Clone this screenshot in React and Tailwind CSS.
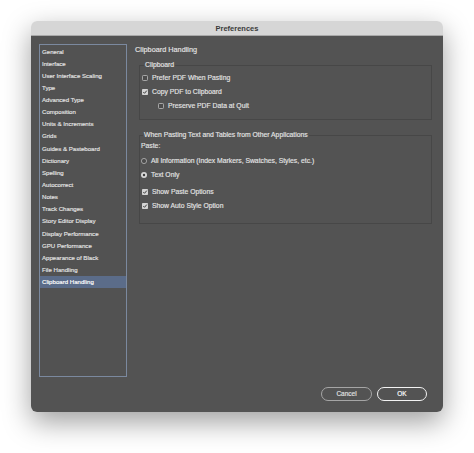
import React from 'react';

const sections = [
  'General',
  'Interface',
  'User Interface Scaling',
  'Type',
  'Advanced Type',
  'Composition',
  'Units & Increments',
  'Grids',
  'Guides & Pasteboard',
  'Dictionary',
  'Spelling',
  'Autocorrect',
  'Notes',
  'Track Changes',
  'Story Editor Display',
  'Display Performance',
  'GPU Performance',
  'Appearance of Black',
  'File Handling',
  'Clipboard Handling',
];

const Checkbox = ({ checked }) => (
  <svg width="6" height="6" viewBox="0 0 6 6" className="shrink-0">
    {checked ? (
      <>
        <rect x="0" y="0" width="6" height="6" rx="0.8" fill="#d4d4d4" />
        <path d="M1.3 3.1 L2.5 4.3 L4.8 1.6" stroke="#3c3c3c" strokeWidth="1" fill="none" />
      </>
    ) : (
      <rect x="0.5" y="0.5" width="5" height="5" rx="0.8" fill="#4c4c4c" stroke="#bdbdbd" strokeWidth="0.8" />
    )}
  </svg>
);

const Radio = ({ checked }) => (
  <svg width="6" height="6" viewBox="0 0 6 6" className="shrink-0">
    {checked ? (
      <>
        <circle cx="3" cy="3" r="3" fill="#d8d8d8" />
        <circle cx="3" cy="3" r="1.2" fill="#3c3c3c" />
      </>
    ) : (
      <circle cx="3" cy="3" r="2.6" fill="#4c4c4c" stroke="#b5b5b5" strokeWidth="0.8" />
    )}
  </svg>
);

const Option = ({ children, control, className = '' }) => (
  <div className={`flex h-[14px] items-center gap-[4px] ${className}`}>
    {control}
    <span>{children}</span>
  </div>
);

export default function App() {
  return (
    <div
      className="h-[453px] w-[474px] bg-white pl-[31px] pt-[21px]"
      style={{ fontFamily: '"Liberation Sans", Arial, sans-serif' }}
    >
      <div className="flex h-[391px] w-[412px] flex-col overflow-hidden rounded-[6px] shadow-[0_10px_28px_rgba(0,0,0,0.38)]">
        <div className="flex h-[15px] shrink-0 items-center justify-center border-b border-[#a9a9a9] bg-[#d6d6d6] pt-[1px] text-[7.5px] font-bold text-[#3a3a3a]">
          Preferences
        </div>

        <div className="flex flex-1 flex-col bg-[#535353] px-[8px] pt-[8px] text-[#e4e4e4] [-webkit-text-stroke:0.15px]">
          <div className="flex">
            <ul className="h-[333px] w-[88px] shrink-0 border border-[#7b899f] bg-[#525252] text-[6.1px]">
              {sections.map((name) => (
                <li
                  key={name}
                  className={`flex h-[12.15px] items-center pl-[2px] ${
                    name === 'Clipboard Handling' ? 'bg-[#5b6c89] text-white' : ''
                  }`}
                >
                  {name}
                </li>
              ))}
            </ul>

            <div className="ml-[8px] flex-1 pr-[3px] text-[6.8px]">
              <div className="h-[12px] text-[7.3px] leading-[12px]">Clipboard Handling</div>

              <fieldset className="ml-[4px] mt-[4px] border border-[#474747] pb-[6px] pl-[2px] pt-[1px]">
                <legend className="ml-[2px] h-[10px] px-[1px] leading-[10px]">Clipboard</legend>
                <Option control={<Checkbox />}>Prefer PDF When Pasting</Option>
                <Option control={<Checkbox checked />}>Copy PDF to Clipboard</Option>
                <Option control={<Checkbox />} className="pl-[16px]">
                  Preserve PDF Data at Quit
                </Option>
              </fieldset>

              <fieldset className="ml-[4px] mt-[10px] border border-[#474747] pb-[10px] pl-[2px] pt-[1px]">
                <legend className="ml-[1px] h-[10px] px-[1px] leading-[10px]">
                  When Pasting Text and Tables from Other Applications
                </legend>
                <div className="-ml-[1px] h-[10px] leading-[10px]">Paste:</div>
                <Option control={<Radio />} className="mt-[3px] -ml-[1px]">
                  All Information (Index Markers, Swatches, Styles, etc.)
                </Option>
                <Option control={<Radio checked />} className="-ml-[1px]">
                  Text Only
                </Option>
                <Option control={<Checkbox checked />} className="mt-[3px]">
                  Show Paste Options
                </Option>
                <Option control={<Checkbox checked />}>Show Auto Style Option</Option>
              </fieldset>
            </div>
          </div>

          <div className="mt-[10px] flex justify-end gap-[5px] pr-[8px] text-[6.5px]">
            <button className="flex h-[14px] w-[51px] items-center justify-center rounded-full border border-[#a5a5a5] text-[#e2e2e2]">
              Cancel
            </button>
            <button className="flex h-[14px] w-[50px] items-center justify-center rounded-full border-[1.5px] border-[#f2f2f2] text-white">
              OK
            </button>
          </div>
        </div>
      </div>
    </div>
  );
}
